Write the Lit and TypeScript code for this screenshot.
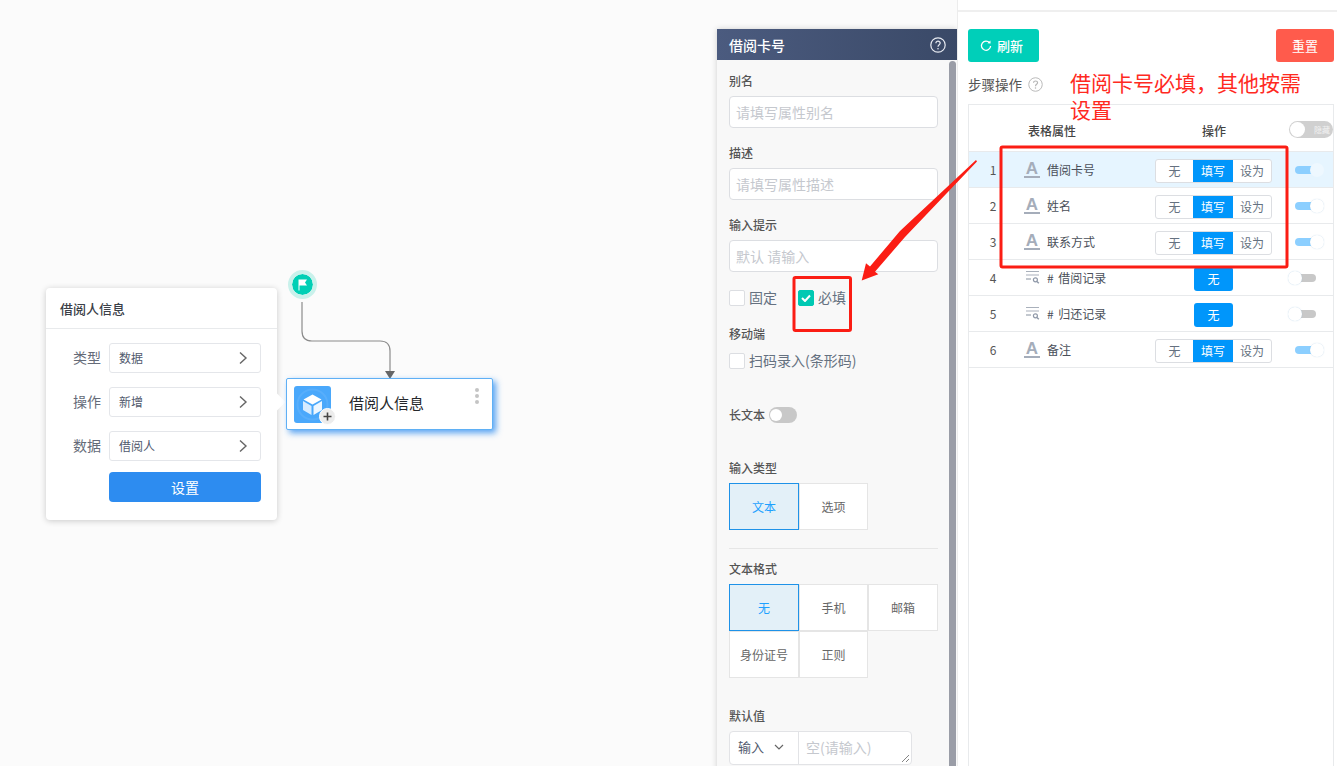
import { LitElement, html, css, svg } from "lit";
import { customElement } from "lit/decorators.js";

const FONT = css`"Noto Sans CJK SC", "Liberation Sans", sans-serif`;

const chevron = html`<svg width="10" height="14" viewBox="0 0 10 14"><path d="M2 1.5 L8 7 L2 12.5" fill="none" stroke="#666" stroke-width="1.4"/></svg>`;
const help = (c: string, s: number, w = 1) => html`<svg width=${s} height=${s} viewBox="0 0 16 16"><circle cx="8" cy="8" r="7.2" fill="none" stroke=${c} stroke-width=${w}/><path d="M5.9 6.2 C5.9 3.5 10.2 3.6 10.2 6.1 C10.2 7.8 8 7.8 8 9.8" fill="none" stroke=${c} stroke-width="1.2"/><circle cx="8" cy="11.8" r=".8" fill=${c}/></svg>`;
const listIcon = html`<svg width="15" height="15" viewBox="0 0 15 15"><g stroke="#a9b0bb" stroke-width="1.2" fill="none"><path d="M1 1.5H14M1 5H14"/><path d="M1 9H6" stroke-width="1.4"/><circle cx="10.4" cy="9.8" r="2" stroke="#8f98a8"/><path d="M12 11.4 L13.8 13.2" stroke="#8f98a8" stroke-width="1.4"/></g></svg>`;

type Row = { n: number; name: string; icon: "a" | "list"; seg: boolean };
const rows: Row[] = [
  { n: 1, name: "借阅卡号", icon: "a", seg: true },
  { n: 2, name: "姓名", icon: "a", seg: true },
  { n: 3, name: "联系方式", icon: "a", seg: true },
  { n: 4, name: "# 借阅记录", icon: "list", seg: false },
  { n: 5, name: "# 归还记录", icon: "list", seg: false },
  { n: 6, name: "备注", icon: "a", seg: true },
];

@customElement("app-root")
export class AppRoot extends LitElement {
  static styles = css`
    :host { display: block; width: 1337px; height: 766px; overflow: hidden; position: relative; font-family: ${FONT}; background: #fbfbfb; color: #515a6e; }
    * { box-sizing: border-box; }
    .page { display: flex; height: 766px; }
    .canvas { flex: 0 0 957px; position: relative; background: #fbfbfb; }
    .conn { position: absolute; left: 0; top: 0; }

    .card { position: absolute; left: 46px; top: 288px; width: 231px; height: 232px; background: #fff; border-radius: 4px; box-shadow: 0 1px 6px rgba(0,0,0,.2); }
    .card::after { content: ""; position: absolute; right: -6px; top: 108px; width: 12px; height: 12px; background: #fff; transform: rotate(45deg); }
    .card-title { height: 41px; padding-left: 14px; display: flex; align-items: center; font-size: 13px; font-weight: 500; color: #3b4048; border-bottom: 1px solid #e8eaec; }
    .card-body { padding: 14px 16px 0 26px; display: flex; flex-direction: column; gap: 14px; }
    .line { display: flex; align-items: center; gap: 8px; }
    .line label { width: 29px; text-align: right; font-size: 14px; color: #656b78; padding-bottom: 2px; line-height: 20px; white-space: nowrap; }
    .select { flex: none; width: 152px; height: 30px; border: 1px solid #e4e6ea; border-radius: 3px; display: flex; align-items: center; justify-content: space-between; padding: 0 12px 1px 9px; font-size: 12px; color: #515a6e; background: #fff; }
    .set { margin: -3px 0 0 37px; width: 152px; height: 30px; border-radius: 4px; background: #2d8cf0; color: #fff; font-size: 14px; display: flex; align-items: center; justify-content: center; }

    .start { position: absolute; left: 288px; top: 270px; width: 29px; height: 29px; border-radius: 50%; background: #00cfb5; border: 4px solid #c9f1eb; background-clip: padding-box; display: flex; align-items: center; justify-content: center; }
    .node { position: absolute; left: 286px; top: 378px; width: 207px; height: 52px; background: #fff; border: 1px solid #5fb0f5; border-radius: 2px; box-shadow: 3px 3px 6px rgba(45,140,240,.8); display: flex; align-items: center; padding-left: 7px; }
    .node-icon { width: 37px; height: 37px; border-radius: 3px; background: #4aa8fb; display: flex; align-items: center; justify-content: center; position: relative; }
    .plus { position: absolute; right: -5px; bottom: -2px; width: 17px; height: 17px; border-radius: 50%; background: #ececec; border: 1px solid #fff; display: flex; align-items: center; justify-content: center; }
    .node-name { margin-left: 18px; font-size: 15px; color: #26282c; padding-bottom: 4px; }
    .dots { position: absolute; right: 13px; top: 9px; display: flex; flex-direction: column; gap: 2px; }
    .dots i { width: 4px; height: 4px; border-radius: 50%; background: #c4c4c4; }

    .panel { position: absolute; left: 717px; top: 29px; width: 240px; height: 760px; background: #f8f8f8; box-shadow: 0 0 6px rgba(0,0,0,.18); }
    .panel-head { height: 31px; background: linear-gradient(90deg, #4b5b7f, #3a4967); color: #fff; font-size: 14px; font-weight: 500; display: flex; align-items: center; justify-content: space-between; padding: 0 11px 0 12px; }
    .scroll { position: absolute; right: 1px; top: 32px; bottom: 0; width: 7px; background: #9a9da7; border-radius: 4px 4px 0 0; }
    .panel-body { padding: 0 19px 0 12px; display: flex; flex-direction: column; }
    .lab { font-size: 12px; font-weight: 500; color: #555; line-height: 16px; }
    .inp { height: 32px; background: #fff; border: 1px solid #dcdee2; border-radius: 4px; padding-left: 7px; display: flex; align-items: center; font-size: 14px; color: #c5c8ce; margin-top: 7px; text-indent: -1px; }
    .checks { display: flex; align-items: center; margin-top: 18px; height: 16px; }
    .chk { display: flex; align-items: center; gap: 4px; font-size: 14px; color: #657180; }
    .chk-text { margin-top: -2px; }
    .spacer { width: 21px; }
    .box { width: 16px; height: 16px; background: #fff; border: 1px solid #dcdee2; border-radius: 2px; display: flex; align-items: center; justify-content: center; }
    .box.on { background: #00c9b3; border-color: #00c9b3; }
    .toggle-row { display: flex; align-items: center; gap: 4px; margin-top: 38px; height: 16px; }
    .tg { width: 28px; height: 16px; border-radius: 8px; background: #c8c8c8; position: relative; }
    .tg::after { content: ""; position: absolute; left: 1px; top: 2px; width: 12px; height: 12px; border-radius: 50%; background: #fff; }
    .opts { display: grid; grid-template-columns: 70px 69px 70px; margin-top: 7px; }
    .opt { height: 47px; border: 1px solid #e5e5e5; background: #fff; font-size: 12px; color: #666; display: flex; align-items: center; justify-content: center; }
    .opt.on { background: #e3f0f8; border-color: #1e92e8; color: #1ea1ff; }
    .sep { height: 1px; background: #e6e6e6; margin: 18px 0 12px; }
    .dv { display: flex; width: 183px; height: 34px; margin-top: 7px; background: #fff; border: 1px solid #e2e3e6; border-radius: 4px; font-size: 13px; }
    .dv-left { width: 69px; display: flex; align-items: center; gap: 10px; padding: 0 0 3px 8px; color: #515a6e; border-right: 1px solid #e2e3e6; }
    .dv-right { flex: 1; display: flex; align-items: center; padding: 0 0 3px 7px; color: #c5c8ce; position: relative; font-size: 14px; }
    .grip { position: absolute; right: 1px; bottom: 1px; }

    .right { flex: 1; background: #fff; border-left: 1px solid #ececec; display: flex; flex-direction: column; position: relative; }
    .topbar { height: 12px; border-bottom: 2px solid #efefef; flex: none; }
    .actions { display: flex; justify-content: space-between; margin-top: 17px; padding: 0 3px 0 10px; }
    .btn { height: 33px; border-radius: 3px; color: #fff; font-size: 13px; display: flex; align-items: center; justify-content: center; }
    .refresh { width: 71px; background: #00cfb9; gap: 5px; font-weight: 500; padding-right: 4px; }
    .reset { width: 58px; background: #ff5b4c; }
    .step { display: flex; align-items: center; gap: 6px; padding-left: 10px; margin-top: 13px; height: 18px; font-size: 13.5px; color: #555; }
    .table { margin: 11px 3px 0 10px; flex: 1; border-left: 1px solid #e8eaec; border-right: 1px solid #e8eaec; border-top: 1px solid #e8eaec; }
    .thead { height: 47px; display: grid; grid-template-columns: 59px 174px 1fr; align-items: end; font-size: 12px; font-weight: 500; color: #444; position: relative; border-bottom: 1px solid #e8eaec; padding-bottom: 12px; }
    .thead .op { grid-column: 3; }
    .hide-tg { position: absolute; right: 0; top: 16px; width: 44px; height: 17px; border-radius: 9px; background: #d0d0d0; color: #eee; font-size: 8px; display: flex; align-items: center; justify-content: flex-end; padding-right: 3px; }
    .hide-tg::before { content: ""; position: absolute; left: 1px; top: 1px; width: 15px; height: 15px; border-radius: 50%; background: #fff; }
    .row { height: 36px; display: flex; align-items: center; border-bottom: 1px solid #e8eaec; font-size: 12px; color: #4a4f59; position: relative; }
    .row.sel { background: #e6f5ff; }
    .num { width: 48px; text-align: center; font-size: 12px; color: #555; }
    .type { width: 16px; margin-left: 7px; display: flex; justify-content: center; }
    .a { font: bold 17px/14px "Liberation Sans", sans-serif; color: #a5adba; border-bottom: 2px solid #a5adba; width: 16px; height: 16px; text-align: center; margin-top: 1px; }
    .name { position: absolute; left: 78px; word-spacing: 2px; }
    .seg { position: absolute; left: 186px; top: 7px; width: 117px; height: 24px; display: flex; background: #fff; border: 1px solid #dcdee2; border-radius: 3px; overflow: hidden; }
    .seg span { flex: 1; display: flex; align-items: center; justify-content: center; color: #657180; padding-bottom: 1px; }
    .seg span:first-child { flex: 0 0 37px; }
    .seg span.on { flex: 0 0 40px; background: #0096fb; color: #fff; }
    .solo { position: absolute; left: 225px; top: 7px; width: 39px; height: 24px; background: #0096fb; color: #fff; border-radius: 3px; display: flex; align-items: center; justify-content: center; padding-bottom: 1px; }
    .mini { position: absolute; left: 326px; top: 11px; width: 30px; height: 14px; }
    .mini .track { position: absolute; top: 3px; height: 8px; border-radius: 4px; width: 24px; background: #8ccfff; }
    .mini .knob { position: absolute; top: 0; right: 1px; width: 14px; height: 14px; border-radius: 50%; background: #fff; box-shadow: 0 0 1px rgba(120,170,210,.5); }
    .sel .mini .knob { background: #eef8ff; box-shadow: none; }
    .mini.off { left: 319px; width: 28px; }
    .mini.off .track { background: #c8c8c8; left: 2px; width: 26px; }
    .mini.off .knob { left: 0; right: auto; box-shadow: 0 0 1px rgba(120,170,210,.6); }

    .note { position: absolute; left: 1070px; top: 69px; width: 240px; font-size: 21px; line-height: 27px; color: #ff2a1f; }
    .marks { position: absolute; left: 0; top: 0; pointer-events: none; }
  `;

  private checks(label: string, on = false) {
    return html`<span class="chk"><span class="box ${on ? "on" : ""}">${on
      ? html`<svg width="10" height="8" viewBox="0 0 10 8"><path d="M1 4 L4 7 L9 1.5" fill="none" stroke="#fff" stroke-width="2"/></svg>`
      : ""}</span><span class="chk-text">${label}</span></span>`;
  }

  private rowView(r: Row) {
    return html`<div class="row ${r.n === 1 ? "sel" : ""}">
      <span class="num">${r.n}</span>
      <span class="type">${r.icon === "a" ? html`<span class="a">A</span>` : listIcon}</span>
      <span class="name">${r.name}</span>
      ${r.seg
        ? html`<div class="seg"><span>无</span><span class="on">填写</span><span>设为</span></div>
            <div class="mini"><div class="track"></div><div class="knob"></div></div>`
        : html`<div class="solo">无</div>
            <div class="mini off"><div class="track"></div><div class="knob"></div></div>`}
    </div>`;
  }

  render() {
    return html`
      <div class="page">
        <div class="canvas">
          <svg class="conn" width="500" height="400" viewBox="0 0 500 400">
            <path d="M302 302 V331 Q302 341 312 341 H380 Q390 341 390 351 V372" fill="none" stroke="#8c8c8c" stroke-width="1.2"/>
            <path d="M385 371 H395 L390 379 Z" fill="#666"/>
          </svg>
          <div class="card">
            <div class="card-title">借阅人信息</div>
            <div class="card-body">
              <div class="line"><label>类型</label><div class="select">数据${chevron}</div></div>
              <div class="line"><label>操作</label><div class="select">新增${chevron}</div></div>
              <div class="line"><label>数据</label><div class="select">借阅人${chevron}</div></div>
              <div class="set">设置</div>
            </div>
          </div>
          <div class="start">
            <svg width="11" height="12" viewBox="0 0 11 12"><path d="M1.5 0.5 H10 L8 3.5 L10 6.5 H2.5 V11.5 H1.5 Z" fill="#fff"/></svg>
          </div>
          <div class="node">
            <div class="node-icon">
              <svg width="37" height="37" viewBox="0 0 37 37">
                <circle cx="18.5" cy="18.5" r="15" fill="none" stroke="#fff" stroke-opacity=".08" stroke-width="2"/>
                <g transform="translate(6.5 6.5)"><path d="M12 2 L21 7 L12 12 L3 7 Z" fill="#fff"/><path d="M2.5 8.5 L11 13.5 V22.5 L2.5 17.5 Z" fill="#d7ecff"/><path d="M21.5 8.5 L13 13.5 V22.5 L21.5 17.5 Z" fill="#eef7ff"/></g>
              </svg>
              <span class="plus"><svg width="9" height="9" viewBox="0 0 9 9"><path d="M4.5 0.5 V8.5 M0.5 4.5 H8.5" stroke="#444" stroke-width="1.6"/></svg></span>
            </div>
            <span class="node-name">借阅人信息</span>
            <div class="dots"><i></i><i></i><i></i></div>
          </div>
          <div class="panel">
            <div class="panel-head"><span>借阅卡号</span>${help("#e8ebf2", 16, 1.2)}</div>
            <div class="scroll"></div>
            <div class="panel-body">
              <div class="lab" style="margin-top:13px">别名</div>
              <div class="inp">请填写属性别名</div>
              <div class="lab" style="margin-top:17px">描述</div>
              <div class="inp">请填写属性描述</div>
              <div class="lab" style="margin-top:17px">输入提示</div>
              <div class="inp">默认 请输入</div>
              <div class="checks">
                ${this.checks("固定")}
                <span class="spacer"></span>
                ${this.checks("必填", true)}
              </div>
              <div class="lab" style="margin-top:20px">移动端</div>
              <div class="checks" style="margin-top:11px">${this.checks("扫码录入(条形码)")}</div>
              <div class="toggle-row"><span class="lab">长文本</span><span class="tg"></span></div>
              <div class="lab" style="margin-top:37px">输入类型</div>
              <div class="opts"><div class="opt on">文本</div><div class="opt">选项</div></div>
              <div class="sep"></div>
              <div class="lab">文本格式</div>
              <div class="opts"><div class="opt on">无</div><div class="opt">手机</div><div class="opt">邮箱</div><div class="opt">身份证号</div><div class="opt">正则</div></div>
              <div class="lab" style="margin-top:30px">默认值</div>
              <div class="dv">
                <div class="dv-left">输入<svg width="10" height="6" viewBox="0 0 10 6"><path d="M1 1 L5 5 L9 1" fill="none" stroke="#666" stroke-width="1.2"/></svg></div>
                <div class="dv-right">空(请输入)<svg class="grip" width="9" height="9" viewBox="0 0 9 9"><path d="M1 8 L8 1 M5 8 L8 5" stroke="#666" stroke-width=".8"/></svg></div>
              </div>
            </div>
          </div>
        </div>
        <div class="right">
          <div class="topbar"></div>
          <div class="actions">
            <div class="btn refresh"><svg width="12" height="12" viewBox="0 0 12 12"><path d="M9.6 2.8 A4.6 4.6 0 1 0 10.6 6" fill="none" stroke="#fff" stroke-width="1.3"/><path d="M7.4 3.2 L10.6 3.6 L10.4 0.6 Z" fill="#fff"/></svg>刷新</div>
            <div class="btn reset">重置</div>
          </div>
          <div class="step">步骤操作 ${help("#b5b5b5", 15)}</div>
          <div class="table">
            <div class="thead"><span></span><span>表格属性</span><span class="op">操作</span><span class="hide-tg">隐藏</span></div>
            ${rows.map((r) => this.rowView(r))}
          </div>
        </div>
      </div>
      <div class="note">借阅卡号必填${"\uFF0C"}其他按需设置</div>
      <svg class="marks" width="1337" height="766" viewBox="0 0 1337 766">
        ${svg`
          <rect x="1001" y="147" width="286" height="120" rx="1.5" fill="none" stroke="#fb1d14" stroke-width="3"/>
          <rect x="794" y="277.5" width="56.5" height="53" rx="1.5" fill="none" stroke="#fb1d14" stroke-width="3"/>
          <path d="M976 160 L977 161.5 L905 237 L875 271.7 L878.3 274.3 L861.7 280.5 L866 263.3 L870 266.5 L900 231 Z" fill="#fb1d14"/>
        `}
      </svg>
    `;
  }
}
